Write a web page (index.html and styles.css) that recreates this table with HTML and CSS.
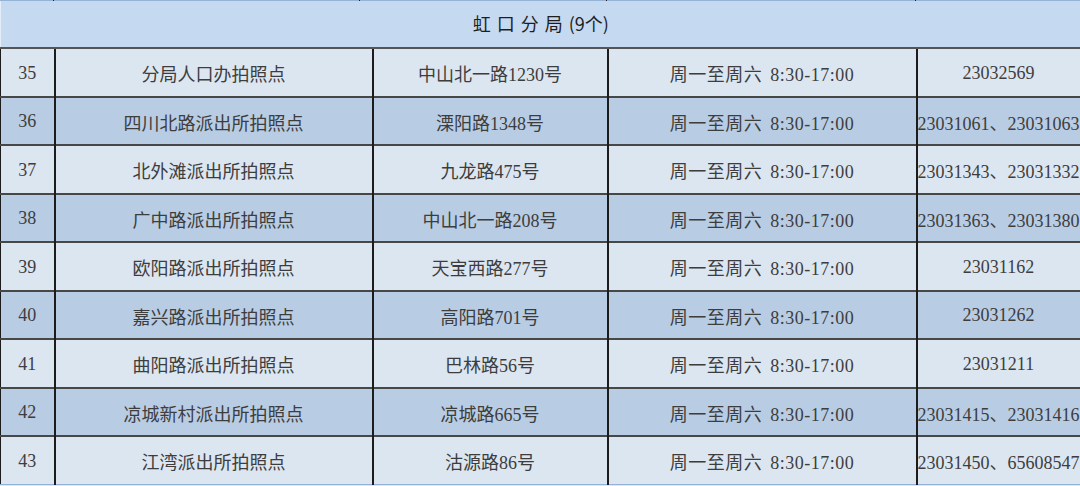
FILE: index.html
```html
<!DOCTYPE html>
<html lang="zh-CN">
<head>
<meta charset="utf-8">
<title>虹口分局</title>
<link rel="stylesheet" href="styles.css">
</head>
<body>
<div class="strip">
  <span class="tick"></span><span class="tick"></span><span class="tick"></span><span class="tick"></span><span class="tick last"></span>
</div>
<table class="sheet">
  <colgroup>
    <col class="c-no"><col class="c-name"><col class="c-addr"><col class="c-time"><col class="c-tel">
  </colgroup>
  <thead>
    <tr class="head"><th colspan="5"><span class="spaced">虹口分局</span>(9个)</th></tr>
  </thead>
  <tbody>
    <tr class="light"><td>35</td><td>分局人口办拍照点</td><td>中山北一路1230号</td><td class="time">周一至周六 8:30-17:00</td><td>23032569</td></tr>
    <tr class="dark"><td>36</td><td>四川北路派出所拍照点</td><td>溧阳路1348号</td><td class="time">周一至周六 8:30-17:00</td><td>23031061、23031063</td></tr>
    <tr class="light"><td>37</td><td>北外滩派出所拍照点</td><td>九龙路475号</td><td class="time">周一至周六 8:30-17:00</td><td>23031343、23031332</td></tr>
    <tr class="dark"><td>38</td><td>广中路派出所拍照点</td><td>中山北一路208号</td><td class="time">周一至周六 8:30-17:00</td><td>23031363、23031380</td></tr>
    <tr class="light"><td>39</td><td>欧阳路派出所拍照点</td><td>天宝西路277号</td><td class="time">周一至周六 8:30-17:00</td><td>23031162</td></tr>
    <tr class="dark"><td>40</td><td>嘉兴路派出所拍照点</td><td>高阳路701号</td><td class="time">周一至周六 8:30-17:00</td><td>23031262</td></tr>
    <tr class="light"><td>41</td><td>曲阳路派出所拍照点</td><td>巴林路56号</td><td class="time">周一至周六 8:30-17:00</td><td>23031211</td></tr>
    <tr class="dark"><td>42</td><td>凉城新村派出所拍照点</td><td>凉城路665号</td><td class="time">周一至周六 8:30-17:00</td><td>23031415、23031416</td></tr>
    <tr class="light"><td>43</td><td>江湾派出所拍照点</td><td>沽源路86号</td><td class="time">周一至周六 8:30-17:00</td><td>23031450、65608547</td></tr>
  </tbody>
</table>
</body>
</html>
```
FILE: styles.css
```css
html, body {
  margin: 0;
  padding: 0;
}
body {
  width: 1080px;
  height: 486px;
  overflow: hidden;
  background: #dce6f1;
  font-family: "Liberation Serif", "Noto Sans CJK SC", serif;
  color: #3d3d3d;
}
.strip {
  display: grid;
  grid-template-columns: 54px 306px 247px 309px 164px;
  height: 1px;
  background: #95b3d7;
}
.tick {
  border-right: 1px solid #222;
}
.tick.last { border-right: none; }
.sheet {
  width: 1080px;
  table-layout: fixed;
  border-collapse: collapse;
}
.c-no { width: 54px; }
.c-name { width: 318px; }
.c-addr { width: 235px; }
.c-time { width: 309px; }
.c-tel { width: 164px; }
.head th {
  height: 44px;
  padding: 0 0 2px 0;
  background: #c5d9f1;
  font-family: "Noto Sans CJK SC", sans-serif;
  font-weight: 400;
  font-size: 18px;
  color: #1e1e1e;
  text-align: center;
  border-left: 1px solid #e4edf8;
  border-bottom: 2px solid #555;
}
.spaced {
  letter-spacing: 6px;
}
td {
  height: 44.5px;
  padding: 2px 0 0 0;
  text-align: center;
  vertical-align: middle;
  white-space: nowrap;
  font-size: 18px;
  border-left: 2px solid #1c1c1c;
  border-right: 2px solid #1c1c1c;
  border-top: 2px solid #474747;
}
td:first-child { border-left: 1px solid #1c1c1c; }
td.time {
  letter-spacing: 0.5px;
  word-spacing: 3px;
}
tbody tr:last-child td { border-bottom: 1px solid #95b3d7; }
.light td { background: #dce6f1; }
.dark td { background: #b8cce4; }
```
